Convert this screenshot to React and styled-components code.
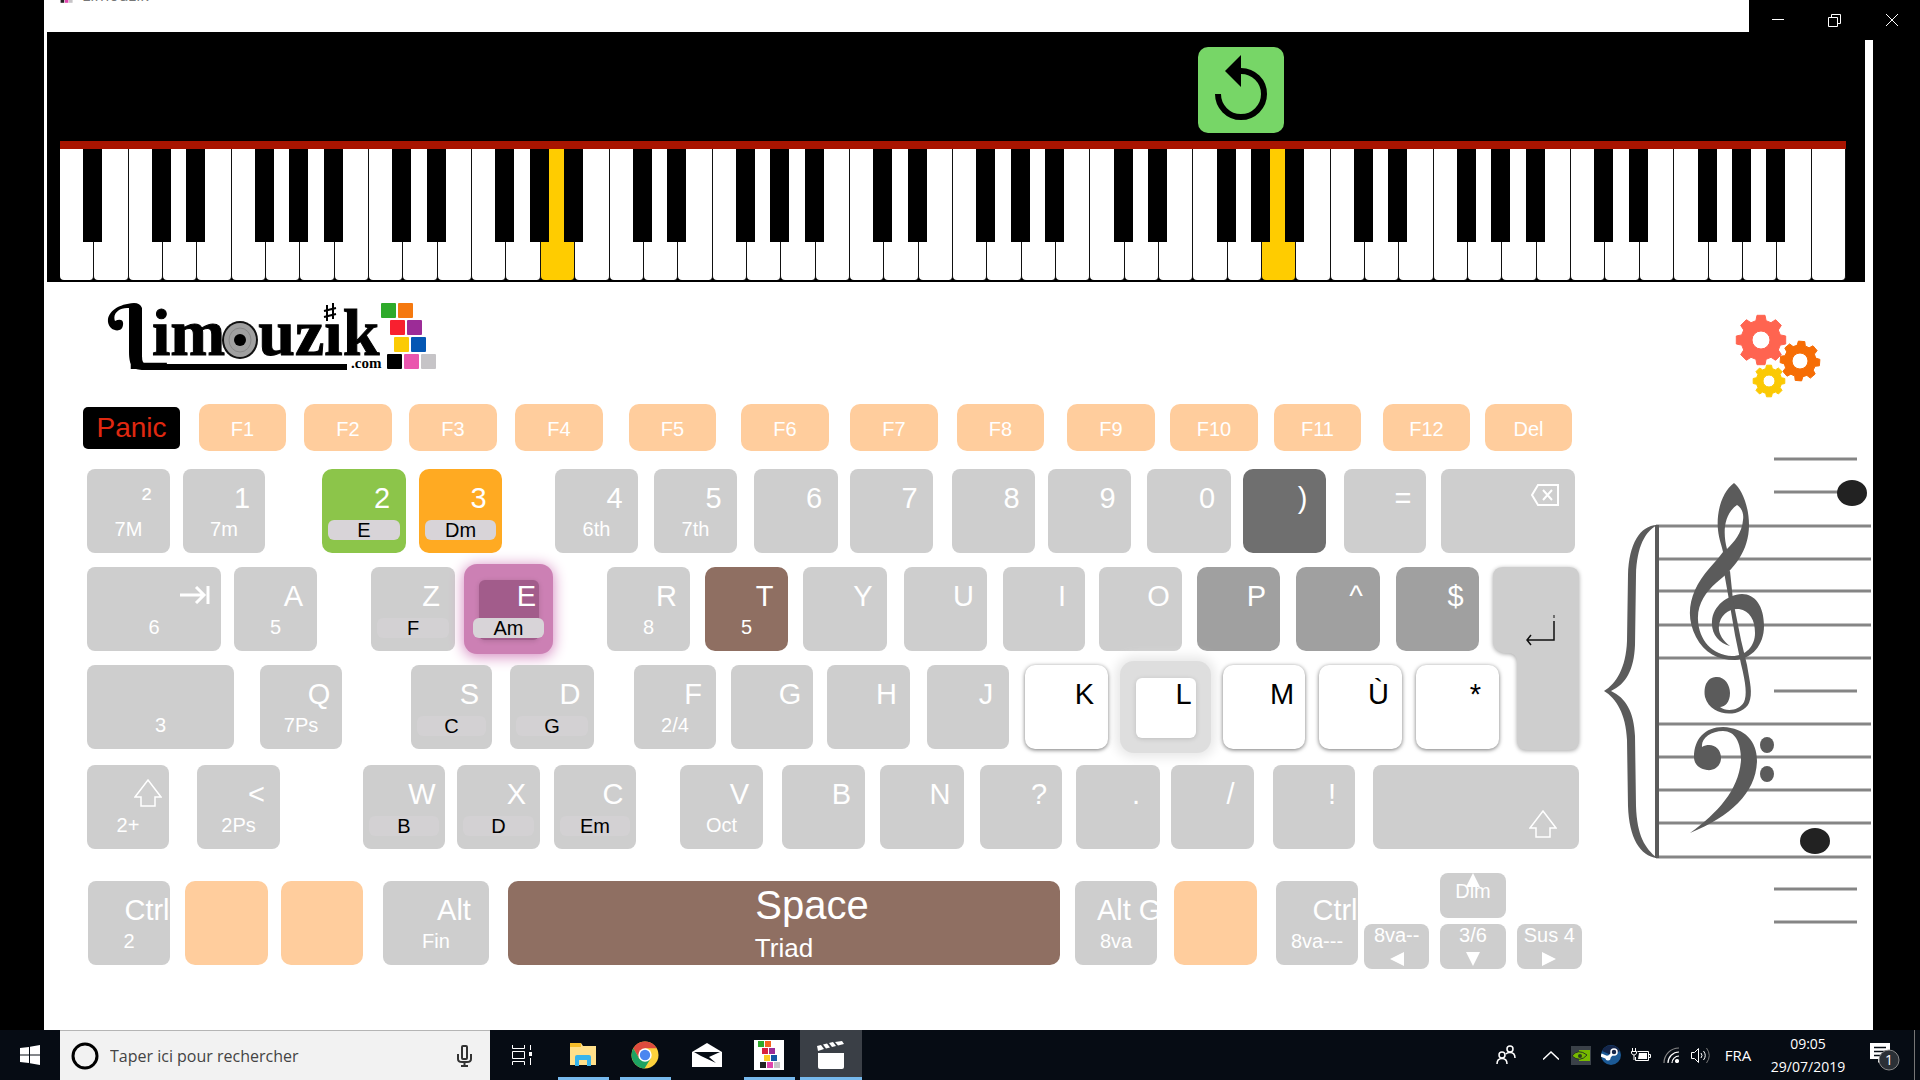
import React from "react";
import styled, { createGlobalStyle, css } from "styled-components";

const GlobalStyle = createGlobalStyle`
  *, *::before, *::after { box-sizing: border-box; }
  body { margin: 0; background: #000; font-family: "Liberation Sans", Arial, sans-serif; }
  button, input { font: inherit; border: 0; margin: 0; padding: 0; color: inherit; }
  svg { display: block; }
`;

/* ---------- window ---------- */

const Screen = styled.div`
  min-height: 100vh;
  display: flex;
  flex-direction: column;
  background: #000;
`;

const AppWindow = styled.div`
  flex: 1;
  display: flex;
  flex-direction: column;
  margin: 0 47px 0 44px;
  background: #fff;
`;

const TitleBar = styled.header`
  height: 32px;
  padding-left: 13px;
  overflow: hidden;
  font: 16px/20px "Open Sans", sans-serif;
  color: #777;
`;

const TitleContent = styled.div`
  display: flex;
  align-items: flex-end;
  gap: 7px;
  height: 20px;
  margin-top: -15px;
`;

const WindowControls = styled.div`
  position: fixed;
  top: 0;
  right: 0;
  z-index: 5;
  display: flex;
  height: 40px;
  background: #000;
`;

const ControlButton = styled.button`
  display: grid;
  place-items: center;
  width: 57px;
  background: transparent;
  color: #fff;
`;

/* ---------- piano ---------- */

const Piano = styled.section`
  margin: 0 8px 0 3px;
  padding: 0 19px 2px 13px;
  background: #000;
`;

const PianoTop = styled.div`
  display: grid;
  grid-template-columns: 1137fr 86px 562fr;
  align-items: center;
  height: 109px;
  padding-top: 6px;
`;

const ReplayButton = styled.button`
  grid-column: 2;
  width: 86px;
  height: 86px;
  padding: 0;
  border-radius: 10px;
  background: #77d667;
`;

const PianoKeys = styled.div`
  display: flex;
  border-top: 8px solid #a81400;
  height: 139px;
`;

const PianoSlot = styled.div`
  position: relative;
  flex: 1;
`;

const WhiteKey = styled.button`
  display: block;
  width: 100%;
  height: 100%;
  border-right: 1px solid #111;
  border-radius: 0 0 4px 4px;
  background: ${(p) => (p.$on ? "#ffcc00" : "#fff")};
`;

const BlackKey = styled.button`
  position: absolute;
  z-index: 1;
  top: 0;
  right: -8px;
  width: 19px;
  height: 93px;
  background: #000;
`;

/* ---------- app header ---------- */

const AppHeader = styled.div`
  display: flex;
  justify-content: space-between;
  align-items: flex-start;
  height: 122px;
  padding: 18px 50px 0 63px;
`;

const GearsButton = styled.button`
  margin-top: 14px;
  background: transparent;
`;

/* ---------- computer keyboard ---------- */

const Main = styled.main`
  display: grid;
  grid-template-columns: minmax(0, 1540fr) minmax(0, 289fr);
  align-items: start;
`;

const Keyboard = styled.div`
  display: flex;
  flex-direction: column;
  gap: 14px;
`;

const KeyRow = styled.div`
  display: grid;
  grid-template-columns: ${(p) => p.$tracks};
  align-items: ${(p) => (p.$short ? "center" : "start")};
  height: ${(p) => (p.$short ? 47 : 84)}px;
  margin-top: ${(p) => p.$space || 0}px;
`;

const tones = {
  grey: ["#cecece", "#fff"],
  mid: ["#a0a0a0", "#fff"],
  dark: ["#6f6f6f", "#fff"],
  brown: ["#8f6f62", "#fff"],
  peach: ["#ffcd9d", "#fff"],
  green: ["#8cc54a", "#fff"],
  orange: ["#ffaa22", "#fff"],
  pink: ["#cc80b4", "#fff"],
  white: ["#fff", "#000"],
  halo: ["#dedede", "#000"],
};

const Key = styled.button`
  position: relative;
  grid-column: ${(p) => p.$col};
  display: flex;
  flex-direction: column;
  align-items: stretch;
  height: 84px;
  padding-top: 9px;
  overflow: hidden;
  white-space: nowrap;
  border-radius: ${(p) => (p.$tone === "grey" ? 8 : 10)}px;
  background: ${(p) => tones[p.$tone][0]};
  color: ${(p) => tones[p.$tone][1]};
  ${(p) => p.$tone === "white" && css`box-shadow: 0 1px 4px rgba(0, 0, 0, 0.55);`}
  ${(p) => p.$tone === "pink" && css`box-shadow: 0 0 0 3px #cc80b4, 0 2px 14px 4px #d68cc2;`}
  ${(p) => p.$tone === "halo" && css`box-shadow: 0 0 0 4px #dedede, 0 0 12px 8px #e6e6e6;`}
`;

const Ripple = styled.span`
  position: absolute;
  top: 13px;
  left: calc(50% - 30px);
  width: 60px;
  height: 60px;
  border-radius: 6px;
  background: ${(p) => p.$color};
  box-shadow: 0 1px 5px rgba(0, 0, 0, 0.15);
`;

const Cap = styled.span`
  position: relative;
  display: flex;
  justify-content: center;
  height: 40px;
  padding-left: 36px;
  font-size: 29px;
  line-height: 40px;
`;

const Sub = styled.span`
  text-align: center;
  font-size: 20px;
  line-height: 22px;
`;

const Chord = styled.span`
  position: relative;
  height: 20px;
  margin: 2px 6px 0;
  border-radius: 6px;
  background: ${(p) => (p.$strong ? "#d8d4d8" : "#d3d1d3")};
  color: #000;
  text-align: center;
  font-size: 20px;
  line-height: 20px;
`;

const FnKey = styled(Key)`
  height: 47px;
  padding-top: 4px;
  align-items: center;
  justify-content: center;
  font-size: 20px;
`;

const PanicKey = styled(FnKey)`
  height: 42px;
  padding-top: 0;
  border-radius: 5px;
  background: #000;
  color: #e02810;
  font-size: 28px;
`;

const IconEnd = styled.span`
  display: flex;
  justify-content: flex-end;
  height: 40px;
  padding: ${(p) => p.$pad};
`;

const SpaceKey = styled(Key)`
  align-items: center;
  padding-top: 2px;
`;

const SpaceTitle = styled.span`
  padding-left: 56px;
  font-size: 40px;
  line-height: 44px;
`;

const SpaceSub = styled.span`
  font-size: 26px;
  line-height: 42px;
`;

const EnterKey = styled(Key)`
  height: 183px;
  padding: 0;
  overflow: visible;
  background: transparent;
`;

const Arrows = styled.div`
  grid-column: ${(p) => p.$col};
  display: grid;
  grid-template-columns: 66fr 66fr 66fr;
  grid-template-areas: ". up ." "left down right";
  gap: 6px 11px;
  margin-top: -8px;
`;

const ArrowKey = styled.button`
  grid-area: ${(p) => p.$area};
  display: flex;
  flex-direction: column;
  align-items: center;
  height: 45px;
  overflow: hidden;
  white-space: nowrap;
  border-radius: 8px;
  background: #cecece;
  color: #fff;
  font-size: 20px;
  line-height: 22px;
  gap: ${(p) => (p.$area === "up" ? 0 : 6)}px;
`;

const ArrowText = styled.span`
  margin-top: ${(p) => (p.$under ? -7 : 0)}px;
`;

/* ---------- taskbar ---------- */

const Taskbar = styled.footer`
  display: flex;
  align-items: stretch;
  height: 50px;
  background: #060c14;
  color: #fff;
  font-family: "Open Sans", sans-serif;
`;

const StartButton = styled.button`
  display: grid;
  place-items: center;
  width: 60px;
  background: transparent;
`;

const SearchBox = styled.label`
  display: flex;
  align-items: center;
  gap: 11px;
  width: 430px;
  padding: 0 18px 0 11px;
  border-top: 1px solid #b5b5b5;
  background: #f2f2f2;
  color: #333;
`;

const SearchInput = styled.input`
  flex: 1;
  min-width: 0;
  background: transparent;
  outline: 0;
  font-size: 16px;
  &::placeholder { color: #444; opacity: 1; }
`;

const TaskButton = styled.button`
  display: grid;
  place-items: center;
  width: 62px;
  border-bottom: 3px solid transparent;
  padding-top: 3px;
  background: ${(p) => (p.$active ? "#3a3f46" : "transparent")};
  ${(p) => p.$open && css`
    background-image: linear-gradient(#76b9ed, #76b9ed);
    background-size: ${p.$active ? 62 : 51}px 3px;
    background-position: bottom center;
    background-repeat: no-repeat;
    background-origin: border-box;
  `}
`;

const Tray = styled.div`
  display: flex;
  align-items: center;
  margin-left: auto;
`;

const TrayButton = styled.button`
  display: grid;
  place-items: center;
  width: ${(p) => p.$w || 30}px;
  height: 50px;
  background: transparent;
  font-size: 15px;
`;

const Clock = styled.button`
  width: 96px;
  height: 50px;
  background: transparent;
  text-align: center;
  font-size: 14px;
  line-height: 23px;
`;

const Corner = styled.span`
  width: 6px;
  height: 50px;
  border-left: 1px solid #777;
`;

/* ---------- drawings ---------- */

const LOGO_SQUARES = [
  [381, 303, "#2eaa2a"], [398, 303, "#f5790f"],
  [390, 320, "#f8202f"], [407, 320, "#9c2c97"],
  [394, 337, "#fbcb04"], [411, 337, "#0457b4"],
  [387, 354, "#000"], [404, 354, "#ea56ae"], [421, 354, "#c6c4c7"],
];

const Logo = () => (
  <svg width="330" height="72" viewBox="107 300 330 72" role="img" aria-label="Limouzik.com">
    <text x="124" y="369" fontFamily="Liberation Sans" fontSize="82">L</text>
    <path d="M142 308Q140 303 134 303C118 304 107 312 108 322C109 331 122 334 123 325C124 319 119 319 115 321C112 313 120 307 129 308V352C129 366 133 370 144 370H347V364H146Q142 364 142 356Z" />
    <text x="152" y="355" fontFamily="Liberation Serif" fontWeight="700" fontSize="66" stroke="#000" strokeWidth="1">imouzik</text>
    <ellipse cx="240" cy="340" rx="18" ry="19" fill="#111" />
    <ellipse cx="240" cy="340" rx="16" ry="17" fill="#a0a0a0" />
    <ellipse cx="240" cy="340" rx="11" ry="12" fill="none" stroke="#888" />
    <circle cx="240" cy="340" r="6" />
    <rect x="322" y="303" width="17" height="18" fill="#fff" />
    <path d="M327 305V321M333 303V319M324 311L336 308M324 317L336 314" stroke="#000" strokeWidth="2" />
    <text x="351" y="368" fontFamily="Liberation Serif" fontWeight="700" fontSize="15">.com</text>
    {LOGO_SQUARES.map(([x, y, c]) => (
      <rect key={c} x={x} y={y} width="15" height="15" rx="1" fill={c} />
    ))}
  </svg>
);

const MiniLogo = ({ w, h }) => (
  <svg width={w} height={h} viewBox="0 0 30 30">
    <rect width="30" height="30" fill="#fff" />
    <path fill="#2eaa2a" d="M4 1h6v6H4z" /><path fill="#f5651f" d="M11 1h6v6h-6z" />
    <path fill="#d8203f" d="M8 8h6v6H8z" /><path fill="#9c2c97" d="M15 8h6v6h-6z" />
    <path fill="#fbcb24" d="M10 15h6v6h-6z" /><path fill="#1457a4" d="M17 15h6v6h-6z" />
    <path fill="#222" d="M6 22h6v6H6z" /><path fill="#e046ae" d="M13 22h6v6h-6z" /><path fill="#c6c4c7" d="M20 22h6v6h-6z" />
  </svg>
);

function gearPath(cx, cy, r, hole, turn) {
  const inner = r * 0.8;
  const pts = [];
  for (let i = 0; i < 8; i += 1) {
    const a = (i * Math.PI) / 4 + turn;
    [[-0.26, inner], [-0.16, r], [0.16, r], [0.26, inner]].forEach(([d, rad]) => {
      pts.push(`${(cx + rad * Math.sin(a + d)).toFixed(1)} ${(cy - rad * Math.cos(a + d)).toFixed(1)}`);
    });
  }
  return `M${pts.join("L")}ZM${cx - hole} ${cy}a${hole} ${hole} 0 1 0 ${hole * 2} 0a${hole} ${hole} 0 1 0 ${-hole * 2} 0Z`;
}

const GEARS = [
  [26, 26, 25, 9, 0, "#ff6450"],
  [65, 47, 20, 8, 0.08, "#f66d05"],
  [34, 67, 16, 6, 0, "#fbc904"],
];

const Gears = () => (
  <svg width="88" height="86" viewBox="0 0 88 86">
    {GEARS.map(([x, y, r, h, t, c]) => (
      <path key={c} d={gearPath(x, y, r, h, t)} fill={c} stroke={c} strokeWidth="1" strokeLinejoin="round" fillRule="evenodd" />
    ))}
  </svg>
);

const STAFF_LINES = [526, 559, 591, 625, 658, 724, 757, 790, 823, 857];
const LEDGER_LINES = [459, 492, 691, 889, 922];

const StaffSvg = styled.svg`
  width: 100%;
  height: auto;
`;

const Staff = () => (
  <StaffSvg viewBox="1584 404 289 530" role="img" aria-label="Grand staff">
    <g stroke="#858585" strokeWidth="3">
      {STAFF_LINES.map((y) => <path key={y} d={`M1656 ${y}H1871`} />)}
      {LEDGER_LINES.map((y) => <path key={y} d={`M1774 ${y}H1857`} />)}
    </g>
    <path d="M1657 525V858" stroke="#5b5b5b" strokeWidth="4" />
    <g fill="#5b5b5b">
      <path d="M1657 525C1640 526 1629 543 1628 575L1627 641C1626 668 1616 684 1604 691C1616 698 1626 714 1627 740L1628 806C1629 838 1640 856 1657 858C1645 848 1637 836 1636 806L1635 736C1634 712 1626 698 1611 691C1626 684 1634 670 1635 645L1636 575C1637 546 1645 532 1657 525Z" />
      <path fillRule="evenodd" d="M1734 483C1723 491 1716 510 1718 530C1719 540 1722 546 1723 552C1716 562 1702 574 1695 590C1688 606 1688 622 1696 637C1704 653 1718 660 1735 660C1752 659 1764 645 1764 626C1764 606 1755 594 1742 594C1727 595 1713 606 1712 621C1711 634 1719 643 1730 646C1722 640 1718 632 1719 626C1720 615 1729 608 1739 609C1750 611 1755 620 1755 633C1755 646 1746 656 1732 656C1712 655 1699 640 1698 620C1697 604 1706 592 1716 583C1734 569 1749 551 1749 525C1749 505 1741 488 1734 483ZM1737 505C1742 508 1744 514 1743 520C1742 533 1734 542 1727 549C1723 534 1723 515 1737 505Z" />
      <path d="M1724 572L1730 571L1733 600L1741 640L1747 665C1750 683 1753 693 1749 703C1742 718 1711 718 1705 697C1703 682 1710 677 1717 677C1725 677 1730 685 1730 693C1730 702 1725 707 1720 707C1726 712 1739 711 1744 702C1747 695 1746 684 1741 664L1735 635L1729 600Z" />
      <path d="M1694 757C1694 739 1705 727 1723 727C1745 728 1757 741 1757 761C1756 793 1731 816 1690 833C1719 812 1739 789 1741 760C1741 742 1735 731 1723 731C1711 731 1701 738 1702 747C1711 742 1721 747 1721 758C1721 766 1714 771 1707 770C1699 769 1694 764 1694 757Z" />
      <ellipse cx="1767" cy="745" rx="7" ry="8" />
      <ellipse cx="1767" cy="774" rx="7" ry="8" />
    </g>
    <ellipse cx="1852" cy="493" rx="15" ry="13" fill="#222" />
    <ellipse cx="1815" cy="841" rx="15" ry="13" fill="#222" />
  </StaffSvg>
);

const TabIcon = () => (
  <svg width="30" height="18" viewBox="0 0 30 18" fill="none" stroke="#fff" strokeWidth="3">
    <path d="M0 9H24M16 1L24 9L16 17M28 0V18" />
  </svg>
);
const BackspaceIcon = () => (
  <svg width="30" height="24" viewBox="0 0 30 24" fill="none" stroke="#fff" strokeWidth="2">
    <path d="M8 2H28V22H8L2 12ZM13 7L22 17M22 7L13 17" />
  </svg>
);
const ShiftIcon = () => (
  <svg width="28" height="28" viewBox="0 0 28 28" fill="none" stroke="#fff" strokeWidth="1.5">
    <path d="M14 1L27 18H21V27H7V18H1Z" />
  </svg>
);
const EnterShape = () => (
  <svg width="100%" height="183" viewBox="0 0 86 183" preserveAspectRatio="none" overflow="visible">
    <path
      d="M10 0H76Q86 0 86 10V173Q86 183 76 183H34Q24 183 24 173V95Q24 86 14 86H10Q0 83 0 75V10Q0 0 10 0Z"
      fill="#cecece"
      style={{ filter: "drop-shadow(0 1px 2px rgba(0,0,0,.35))" }}
    />
    <path d="M61 54V73H34M38 68L34 73L38 78" fill="none" stroke="#111" strokeWidth="1.5" />
    <path d="M61 48V51" stroke="#111" strokeWidth="1" />
  </svg>
);

const ARROW_SHAPES = {
  up: "M7 0L14 14H0Z",
  down: "M0 0H14L7 14Z",
  left: "M14 0V14L0 7Z",
  right: "M0 0V14L14 7Z",
};
const Triangle = ({ dir }) => (
  <svg width="14" height="14" viewBox="0 0 14 14"><path d={ARROW_SHAPES[dir]} fill="#fff" /></svg>
);

/* ---------- data ---------- */

// Each key: [gap before it, its width, cap, second line, tone, extra]
const FN_ROW = [
  [39, 97, "Panic", null, "panic"], [19, 87, "F1"], [18, 88, "F2"], [17, 88, "F3"], [18, 88, "F4"],
  [26, 87, "F5"], [25, 88, "F6"], [21, 88, "F7"], [19, 87, "F8"], [23, 88, "F9"], [15, 88, "F10"],
  [16, 87, "F11"], [22, 87, "F12"], [15, 87, "Del"],
];
const DIGIT_ROW = [
  [43, 83, "²", "7M"], [13, 82, "1", "7m"], [57, 84, "2", null, "green", { chord: "E" }],
  [13, 83, "3", null, "orange", { chord: "Dm" }], [53, 83, "4", "6th"], [16, 83, "5", "7th"],
  [17, 84, "6"], [12, 83, "7"], [19, 83, "8"], [13, 83, "9"], [16, 84, "0"],
  [12, 83, ")", null, "dark"], [18, 82, "="], [15, 134, null, null, "grey", { icon: "back" }],
];
const TOP_ROW = [
  [43, 134, null, "6", "grey", { icon: "tab" }], [13, 83, "A", "5"],
  [54, 84, "Z", null, "grey", { chord: "F" }], [12, 83, "E", null, "pink", { chord: "Am", ripple: "#a25c8b" }],
  [57, 83, "R", "8"], [15, 83, "T", "5", "brown"], [15, 84, "Y"], [17, 83, "U"], [16, 82, "I"],
  [14, 83, "O"], [15, 83, "P", null, "mid"], [16, 84, "^", null, "mid"], [16, 83, "$", null, "mid"],
  [14, 86, null, null, "enter"],
];
const HOME_ROW = [
  [43, 147, "", "3"], [26, 82, "Q", "7Ps"], [69, 81, "S", null, "grey", { chord: "C" }],
  [18, 84, "D", null, "grey", { chord: "G" }], [40, 82, "F", "2/4"], [15, 82, "G"], [14, 83, "H"],
  [17, 82, "J"], [16, 83, "K", null, "white"], [16, 83, "L", null, "halo", { ripple: "#fff" }],
  [16, 82, "M", null, "white"], [14, 83, "Ù", null, "white"], [14, 83, "*", null, "white"],
];
const LOW_ROW = [
  [43, 82, null, "2+", "grey", { icon: "shift" }], [28, 83, "<", "2Ps"],
  [83, 82, "W", null, "grey", { chord: "B" }], [12, 83, "X", null, "grey", { chord: "D" }],
  [14, 82, "C", null, "grey", { chord: "Em" }], [44, 83, "V", "Oct"], [19, 83, "B"], [15, 84, "N"],
  [16, 82, "?"], [14, 84, "."], [11, 83, "/"], [19, 82, "!"],
  [18, 206, null, null, "grey", { icon: "shiftRight" }],
];
const SPACE_ROW = [
  [44, 82, "Ctrl", "2"], [15, 83, "", null, "peach"], [13, 82, "", null, "peach"], [20, 106, "Alt", "Fin"],
  [19, 552, "Space", "Triad", "space"], [15, 82, "Alt Gr", "8va"], [17, 83, "", null, "peach"],
  [19, 82, "Ctrl", "8va---"], [6, 218, null, null, "arrows"],
];

const KEYBOARD_UNITS = 1540;

function tracks(row) {
  const used = row.reduce((sum, [gap, width]) => sum + gap + width, 0);
  const cols = row.map(([gap, width]) => `minmax(0, ${gap}fr) minmax(0, ${width}fr)`);
  return `${cols.join(" ")} minmax(0, ${Math.max(KEYBOARD_UNITS - used, 0)}fr)`;
}

const ICONS = {
  tab: ["10px 11px 0 0", TabIcon, "Tab"],
  back: ["5px 15px 0 0", BackspaceIcon, "Backspace"],
  shift: ["5px 7px 0 0", ShiftIcon, "Shift"],
  shiftRight: ["36px 22px 0 0", ShiftIcon, "Shift"],
};

function KeyboardKey({ col, data }) {
  const [, , cap, sub, tone = "grey", extra = {}] = data;
  if (tone === "enter") {
    return <EnterKey $col={col} $tone="grey" aria-label="Enter"><EnterShape /></EnterKey>;
  }
  if (tone === "space") {
    return (
      <SpaceKey $col={col} $tone="brown">
        <SpaceTitle>{cap}</SpaceTitle>
        <SpaceSub>{sub}</SpaceSub>
      </SpaceKey>
    );
  }
  if (tone === "arrows") {
    return (
      <Arrows $col={col}>
        <ArrowKey $area="up"><Triangle dir="up" /><ArrowText $under>Dim</ArrowText></ArrowKey>
        <ArrowKey $area="left"><ArrowText>8va--</ArrowText><Triangle dir="left" /></ArrowKey>
        <ArrowKey $area="down"><ArrowText>3/6</ArrowText><Triangle dir="down" /></ArrowKey>
        <ArrowKey $area="right"><ArrowText>Sus 4</ArrowText><Triangle dir="right" /></ArrowKey>
      </Arrows>
    );
  }
  const [pad, Icon, name] = ICONS[extra.icon] || [];
  return (
    <Key $col={col} $tone={tone} aria-label={name}>
      {extra.ripple && <Ripple $color={extra.ripple} />}
      {Icon ? <IconEnd $pad={pad}><Icon /></IconEnd> : <Cap>{cap}</Cap>}
      {sub && <Sub>{sub}</Sub>}
      {extra.chord && <Chord $strong={tone !== "grey"}>{extra.chord}</Chord>}
    </Key>
  );
}

const Row = ({ keys, space }) => (
  <KeyRow $tracks={tracks(keys)} $space={space}>
    {keys.map((k, i) => <KeyboardKey key={i} col={2 * i + 2} data={k} />)}
  </KeyRow>
);

const NOTES = ["A", "B", "C", "D", "E", "F", "G"];
const WHITE_KEYS = Array.from({ length: 52 }, (_, i) => ({
  note: NOTES[i % 7],
  on: i === 14 || i === 35,
  sharp: !["B", "E"].includes(NOTES[i % 7]) && i < 51,
}));

export default function App() {
  return (
    <Screen>
      <GlobalStyle />
      <WindowControls>
        <ControlButton aria-label="Minimize">
          <svg width="12" height="12" viewBox="0 0 12 12"><path d="M0 5.500h12" stroke="#fff" /></svg>
        </ControlButton>
        <ControlButton aria-label="Restore">
          <svg width="13" height="13" viewBox="0 0 13 13" fill="none" stroke="#fff"><path d="M.5 3.500h9v9h-9zM3.500 3V.5h9v9H10" /></svg>
        </ControlButton>
        <ControlButton aria-label="Close">
          <svg width="12" height="12" viewBox="0 0 12 12" stroke="#fff"><path d="M0 0L12 12M12 0L0 12" /></svg>
        </ControlButton>
      </WindowControls>

      <AppWindow>
        <TitleBar>
          <TitleContent><MiniLogo w={18} h={20} /><span>Limouzik</span></TitleContent>
        </TitleBar>

        <Piano>
          <PianoTop>
            <ReplayButton aria-label="Reset">
              <svg width="86" height="86" viewBox="0 0 86 86">
                <path d="M20 47A23 23 0 1 0 43 24" fill="none" stroke="#000" strokeWidth="6" />
                <path d="M43 8V40L27 24Z" />
              </svg>
            </ReplayButton>
          </PianoTop>
          <PianoKeys>
            {WHITE_KEYS.map((k, i) => (
              <PianoSlot key={i}>
                <WhiteKey $on={k.on} aria-label={k.note} />
                {k.sharp && <BlackKey aria-label={`${k.note} sharp`} />}
              </PianoSlot>
            ))}
          </PianoKeys>
        </Piano>

        <AppHeader>
          <Logo />
          <GearsButton aria-label="Settings"><Gears /></GearsButton>
        </AppHeader>

        <Main>
          <Keyboard>
            <KeyRow $tracks={tracks(FN_ROW)} $short>
              {FN_ROW.map(([, , label, , tone], i) =>
                tone === "panic" ? (
                  <PanicKey key={label} $col={2} $tone="dark">{label}</PanicKey>
                ) : (
                  <FnKey key={label} $col={2 * i + 2} $tone="peach">{label}</FnKey>
                )
              )}
            </KeyRow>
            <Row keys={DIGIT_ROW} space={4} />
            <Row keys={TOP_ROW} />
            <Row keys={HOME_ROW} />
            <Row keys={LOW_ROW} space={2} />
            <Row keys={SPACE_ROW} space={18} />
          </Keyboard>
          <Staff />
        </Main>
      </AppWindow>

      <Taskbar>
        <StartButton aria-label="Start">
          <svg width="20" height="20" viewBox="0 0 20 20" fill="#fff"><path d="M0 3L9 2V9.500H0zM10 1.800L20 0V9.500H10zM0 10.500H9V18L0 17zM10 10.500H20V20L10 18.200z" /></svg>
        </StartButton>
        <SearchBox>
          <svg width="28" height="28" viewBox="0 0 28 28"><circle cx="14" cy="14" r="12" fill="none" stroke="#000" strokeWidth="3" /></svg>
          <SearchInput type="text" placeholder="Taper ici pour rechercher" aria-label="Taper ici pour rechercher" />
          <svg width="15" height="22" viewBox="0 0 15 22" fill="none" stroke="#333" strokeWidth="2"><rect x="5" y="1" width="5" height="13" rx="1" /><path d="M1 9V14Q1 17 5 17H10Q14 17 14 14V9M7.500 17V21M4 21H11" /></svg>
        </SearchBox>
        <TaskButton aria-label="Task view">
          <svg width="21" height="20" viewBox="0 0 21 20" fill="none" stroke="#fff"><path d="M1.500 0V3.500H13.500V0M1.500 6.500H13.500V13.500H1.500zM1.500 20V16.500H13.500V20M19.500 0V5M19.500 13V20" /><path d="M18 7h3v4h-3z" fill="#fff" stroke="none" /></svg>
        </TaskButton>
        <TaskButton $open aria-label="File explorer">
          <svg width="28" height="24" viewBox="0 0 28 24"><path d="M1 0H12L14 3H27V22H1z" fill="#ffe08a" /><path d="M1 0H12V4H1z" fill="#f5bd2a" /><path d="M6 23V14Q6 12 8 12H20Q22 12 22 14V23H18V17H10V23z" fill="#36b4ec" /></svg>
        </TaskButton>
        <TaskButton $open aria-label="Chrome">
          <svg width="28" height="28" viewBox="0 0 28 28"><circle cx="14" cy="14" r="13.500" fill="#fdd23c" /><path d="M2.300 7.300A13.500 13.500 0 0 1 25.700 7.300H14L8.200 17.400z" fill="#dd4b3e" /><path d="M2.300 7.300A13.500 13.500 0 0 0 13.500 27.500L19.800 17.300L8.200 17.400z" fill="#1da362" /><circle cx="14" cy="14" r="6.700" fill="#fff" /><circle cx="14" cy="14" r="5.200" fill="#4a86f0" /></svg>
        </TaskButton>
        <TaskButton aria-label="Mail">
          <svg width="30" height="24" viewBox="0 0 30 24"><path d="M0 9L15 0L30 9V24H0z" fill="#fff" /><path d="M2 9H28L17 14L24 20L9 13z" fill="#060c14" /></svg>
        </TaskButton>
        <TaskButton $open aria-label="Limouzik"><MiniLogo w={30} h={30} /></TaskButton>
        <TaskButton $open $active aria-label="Films">
          <svg width="28" height="28" viewBox="0 0 28 28" fill="#fff"><path d="M1 12H27V26Q27 28 25 28H3Q1 28 1 26z" /><path d="M0 5L4 4L7 8L1 10zM6 3.500L10 2.500L13 6.500L9 7.500zM12 2L16 1L19 5L15 6zM18 1L25 0L27 3L21 4.500z" /></svg>
        </TaskButton>

        <Tray>
          <TrayButton $w={60} aria-label="People">
            <svg width="20" height="20" viewBox="0 0 20 20" fill="none" stroke="#fff" strokeWidth="1.500"><circle cx="6" cy="10" r="3" /><path d="M1 19Q1 13.500 6 13.500T11 19" /><circle cx="14" cy="4" r="3" /><path d="M10 9Q11 7.500 14 7.500Q19 7.500 19 13" /></svg>
          </TrayButton>
          <TrayButton aria-label="Show hidden icons">
            <svg width="16" height="9" viewBox="0 0 16 9" fill="none" stroke="#fff" strokeWidth="1.500"><path d="M0 8.500L8 1L16 8.500" /></svg>
          </TrayButton>
          <TrayButton aria-label="Nvidia">
            <svg width="20" height="19" viewBox="0 0 20 19"><rect width="20" height="19" fill="#3a4148" /><path d="M8 4H19V15H8z" fill="#76b900" /><path d="M1 10Q7 2 16 9Q9 17 1 10z" fill="#76b900" stroke="#2a3a20" /><circle cx="9" cy="10" r="2" fill="#2a3a20" /></svg>
          </TrayButton>
          <TrayButton aria-label="Steam">
            <svg width="20" height="20" viewBox="0 0 20 20"><circle cx="10" cy="10" r="10" fill="#1b5a96" /><path d="M1 6A10 10 0 0 1 19 6L10 10z" fill="#14264a" /><path d="M0 10L7 13L13 7" stroke="#fff" strokeWidth="3" fill="none" /><circle cx="13" cy="7" r="3" fill="#14264a" stroke="#fff" strokeWidth="1.500" /><circle cx="7" cy="13" r="2.500" fill="#fff" /></svg>
          </TrayButton>
          <TrayButton aria-label="Battery">
            <svg width="20" height="14" viewBox="0 0 20 14" fill="none" stroke="#fff"><path d="M6.500 3.500H17.500V12.500H4.500V9M17.500 6.500H19.500V9.500H17.500M1.500 0V3M4.500 0V3M.5 3.500H5.500V5Q5 7 3 7Q1 7 .5 5zM3 7V12" /><path d="M8 5h8v6H7z" fill="#fff" stroke="none" /></svg>
          </TrayButton>
          <TrayButton aria-label="Network">
            <svg width="16" height="16" viewBox="0 0 16 16" fill="none" stroke="#fff" strokeWidth="1.200"><path d="M1 16A15 15 0 0 1 16 1" stroke="#888" /><path d="M5 16A11 11 0 0 1 16 5M9 16A7 7 0 0 1 16 9" /><circle cx="14" cy="14" r="1.500" fill="#fff" /></svg>
          </TrayButton>
          <TrayButton aria-label="Volume">
            <svg width="20" height="17" viewBox="0 0 20 17" fill="none" stroke="#fff"><path d="M.5 5.500H3.500L7.500 1.500V15.500L3.500 11.500H.5zM10 6Q12 8.500 10 11M12.500 4Q16 8.500 12.500 13" /><path d="M15.500 1Q21 8.500 15.500 16" stroke="#777" /></svg>
          </TrayButton>
          <TrayButton $w={44}>FRA</TrayButton>
          <Clock>09:05<br />29/07/2019</Clock>
          <TrayButton $w={58} aria-label="Notifications, 1 new">
            <svg width="32" height="32" viewBox="0 0 32 32"><path d="M1 4H21V20H13L9 24V20H1z" fill="#fff" /><path d="M5 8.500H17M5 12.500H17M5 16.500H12" stroke="#060c14" strokeWidth="1.500" /><circle cx="20" cy="21" r="10" fill="#2b3036" stroke="#888" /><text x="20" y="26" textAnchor="middle" fill="#fff" fontFamily="Open Sans" fontSize="14">1</text></svg>
          </TrayButton>
          <Corner />
        </Tray>
      </Taskbar>
    </Screen>
  );
}
